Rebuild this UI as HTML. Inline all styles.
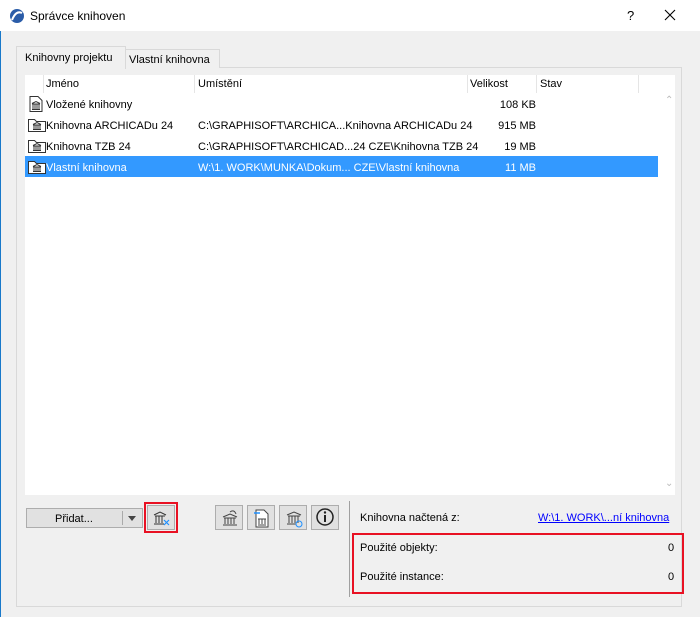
<!DOCTYPE html>
<html><head><meta charset="utf-8"><style>
*{box-sizing:border-box;margin:0;padding:0}
body{width:700px;height:617px;background:#f0f0f0;font-family:"Liberation Sans",sans-serif;font-size:11px;color:#000;position:relative;overflow:hidden}
.a{position:absolute}
.title{left:0;top:0;width:700px;height:31px;background:#fff}
.btn{border:1px solid #adadad;background:#e1e1e1}
.row{position:absolute;left:25px;width:633px;height:21px;line-height:21px}
.row span{position:absolute;white-space:nowrap;top:2px}
.row span.r{right:122px;text-align:right}
.ico{position:absolute;left:3px;top:3px}
</style></head><body>
<div class="a" style="left:0;top:0;width:1px;height:617px;background:#1979ca"></div>
<div class="a title"></div>
<svg class="a" style="left:9px;top:8px" width="16" height="16"><circle cx="8" cy="8" r="7" fill="#2a5ca8"/><path d="M3 12 Q7 2 13 5" stroke="#fff" stroke-width="2" fill="none"/></svg>
<div class="a" style="left:30px;top:9px;font-size:12px">Správce knihoven</div>
<div class="a" style="left:627px;top:8px;font-size:13px">?</div>
<svg class="a" style="left:664px;top:9px" width="12" height="12"><path d="M1 1L11 11M11 1L1 11" stroke="#000" stroke-width="1.1"/></svg>
<!-- panel -->
<div class="a" style="left:16px;top:67px;width:666px;height:540px;border:1px solid #d9d9d9;background:#f0f0f0"></div>
<div class="a" style="left:16px;top:46px;width:110px;height:23px;border:1px solid #d9d9d9;border-bottom:none;background:#f0f0f0;padding:5px 0 0 8px">Knihovny projektu</div>
<div class="a" style="left:125px;top:49px;width:95px;height:19px;border:1px solid #d9d9d9;border-bottom:none;background:#f0f0f0;padding:4px 0 0 3px">Vlastní knihovna</div>
<div class="a" style="left:25px;top:75px;width:650px;height:420px;background:#fff"></div>
<div class="a" style="left:665px;top:95px;color:#bbb;font-size:10px">⌃</div>
<div class="a" style="left:665px;top:478px;color:#bbb;font-size:10px">⌄</div>
<!-- header -->
<div class="a" style="left:25px;top:75px;width:633px;height:18px">
<span class="a" style="left:18px;top:0;width:1px;height:18px;background:#e5e5e5"></span>
<span class="a" style="left:21px;top:3px">Jméno</span>
<span class="a" style="left:169px;top:0;width:1px;height:18px;background:#e5e5e5"></span>
<span class="a" style="left:173px;top:3px">Umístění</span>
<span class="a" style="left:442px;top:0;width:1px;height:18px;background:#e5e5e5"></span>
<span class="a" style="left:445px;top:3px">Velikost</span>
<span class="a" style="left:511px;top:0;width:1px;height:18px;background:#e5e5e5"></span>
<span class="a" style="left:515px;top:3px">Stav</span>
<span class="a" style="left:613px;top:0;width:1px;height:18px;background:#e5e5e5"></span>
</div>
<div class="row" style="top:93px"><svg class="ico" width="16" height="16"><path d="M2 .5h8l4 4v11H2z" fill="#fff" stroke="#333"/><path d="M4 8h8M5 8v5M7 8v5M9 8v5M11 8v5M4 13.5h8M4 7.5l4-2 4 2" stroke="#333" fill="none"/></svg><span style="left:21px">Vložené knihovny</span><span class="r">108 KB</span></div>
<div class="row" style="top:114px"><svg class="ico" width="18" height="16"><path d="M.5 2.5h6l2 2h9v10H.5z" fill="#fff" stroke="#333"/><path d="M5 8h8M6 8v4M8 8v4M10 8v4M12 8v4M5 12.5h8M5 7.5l4-2 4 2" stroke="#333" fill="none"/></svg><span style="left:21px">Knihovna ARCHICADu 24</span><span style="left:173px">C:\GRAPHISOFT\ARCHICA...Knihovna ARCHICADu 24</span><span class="r">915 MB</span></div>
<div class="row" style="top:135px"><svg class="ico" width="18" height="16"><path d="M.5 2.5h6l2 2h9v10H.5z" fill="#fff" stroke="#333"/><path d="M5 8h8M6 8v4M8 8v4M10 8v4M12 8v4M5 12.5h8M5 7.5l4-2 4 2" stroke="#333" fill="none"/></svg><span style="left:21px">Knihovna TZB 24</span><span style="left:173px">C:\GRAPHISOFT\ARCHICAD...24 CZE\Knihovna TZB 24</span><span class="r">19 MB</span></div>
<div class="row" style="top:156px;background:#3399ff;color:#fff"><svg class="ico" width="18" height="16"><path d="M.5 2.5h6l2 2h9v10H.5z" fill="#fff" stroke="#333"/><path d="M5 8h8M6 8v4M8 8v4M10 8v4M12 8v4M5 12.5h8M5 7.5l4-2 4 2" stroke="#333" fill="none"/></svg><span style="left:21px">Vlastní knihovna</span><span style="left:173px">W:\1. WORK\MUNKA\Dokum... CZE\Vlastní knihovna</span><span class="r">11 MB</span></div>
<!-- bottom buttons -->
<div class="a btn" style="left:26px;top:508px;width:117px;height:20px"></div>
<div class="a" style="left:55px;top:513px">Přidat...</div>
<div class="a" style="left:122px;top:511px;width:1px;height:14px;background:#aaa"></div>
<div class="a" style="left:128px;top:516px;width:0;height:0;border:4px solid transparent;border-top:5px solid #444"></div>
<div class="a" style="left:144px;top:502px;width:34px;height:31px;border:2px solid #e81123"></div>
<div class="a btn" style="left:147px;top:505px;width:28px;height:25px"></div>
<svg class="a" style="left:151px;top:507px" width="20" height="20"><path d="M4 9h10M5 9v7M8 9v7M11 9v7M3 17h10M3 8l6-3 6 3" stroke="#333" fill="none"/><path d="M13 13l5 5M18 13l-5 5" stroke="#1e90ff" stroke-width="1.2"/></svg>
<div class="a btn" style="left:215px;top:505px;width:28px;height:25px"></div>
<div class="a btn" style="left:247px;top:505px;width:28px;height:25px"></div>
<div class="a btn" style="left:279px;top:505px;width:28px;height:25px"></div>
<div class="a btn" style="left:311px;top:505px;width:28px;height:25px"></div>
<svg class="a" style="left:220px;top:508px" width="20" height="20"><path d="M4 10h12M5 10v6M8 10v6M11 10v6M14 10v6M3 17h14M3 9l7-3 7 3" stroke="#444" fill="none"/><path d="M10 4q4-3 6 2" stroke="#444" fill="none"/></svg>
<svg class="a" style="left:252px;top:508px" width="20" height="20"><path d="M4 2h8l4 4v13H4z" fill="#fff" stroke="#444"/><path d="M6 11h8M7 11v5M10 11v5M13 11v5M6 17h8" stroke="#444"/><path d="M2 5h6" stroke="#1e90ff" stroke-width="1.5"/></svg>
<svg class="a" style="left:284px;top:508px" width="20" height="20"><path d="M4 8h12M5 8v7M8 8v7M11 8v7M14 8v7M3 16h9M3 7l7-3 7 3" stroke="#444" fill="none"/><circle cx="15" cy="16" r="3" stroke="#1e90ff" fill="none"/></svg>
<svg class="a" style="left:315px;top:507px" width="20" height="20"><circle cx="10" cy="10" r="8" stroke="#222" stroke-width="1.5" fill="none"/><path d="M10 8v7" stroke="#222" stroke-width="2"/><circle cx="10" cy="5.5" r="1.2" fill="#222"/></svg>
<div class="a" style="left:349px;top:501px;width:1px;height:96px;background:#a0a0a0"></div>
<div class="a" style="left:360px;top:512px">Knihovna načtená z:</div>
<div class="a" style="left:538px;top:512px;color:#0000ff;text-decoration:underline">W:\1. WORK\...ní knihovna</div>
<div class="a" style="left:352px;top:533px;width:332px;height:61px;border:2px solid #e81123"></div>
<div class="a" style="left:360px;top:542px">Použité objekty:</div>
<div class="a" style="left:668px;top:542px">0</div>
<div class="a" style="left:360px;top:571px">Použité instance:</div>
<div class="a" style="left:668px;top:571px">0</div>
</body></html>
